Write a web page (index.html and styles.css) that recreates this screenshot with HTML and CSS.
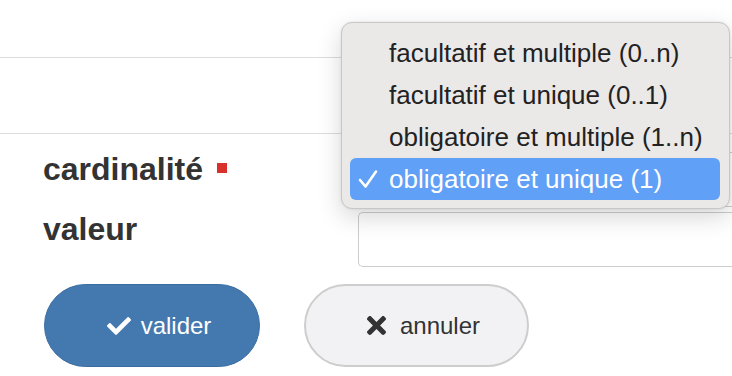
FILE: index.html
```html
<!DOCTYPE html>
<html>
<head>
    <link rel="stylesheet" href="styles.css">
</head>
<body>
    <div class="form">
        <div class="prev-row"></div>

        <div class="field-row row-cardinality">
            <div class="field-label">cardinalité <span class="required"></span></div>
            <div class="field-box select-box"></div>
        </div>

        <div class="field-row row-value">
            <div class="field-label">valeur</div>
            <input class="field-box" type="text">
        </div>

        <div class="actions">
            <button class="btn btn-primary">
                <svg class="icon-check" viewBox="0 64 512 384"><path fill="currentColor" d="M173.898 439.404l-166.4-166.4c-9.997-9.997-9.997-26.206 0-36.204l36.203-36.204c9.997-9.998 26.207-9.998 36.204 0L192 312.69 432.095 72.596c9.997-9.997 26.207-9.997 36.204 0l36.203 36.204c9.997 9.997 9.997 26.206 0 36.204l-294.4 294.401c-9.998 9.997-26.207 9.997-36.204-.001z"/></svg>
                valider
            </button>
            <button class="btn btn-default">
                <svg class="icon-times" viewBox="0 80 352 352"><path fill="currentColor" d="M242.72 256l100.07-100.07c12.28-12.28 12.28-32.19 0-44.48l-22.24-22.24c-12.28-12.280-32.19-12.28-44.48 0L176 189.28 75.930 89.21c-12.28-12.28-32.19-12.28-44.48 0L9.21 111.45c-12.28 12.28-12.28 32.19 0 44.48L109.28 256 9.21 356.07c-12.28 12.28-12.28 32.19 0 44.48l22.24 22.24c12.28 12.28 32.2 12.28 44.48 0L176 322.72l100.07 100.07c12.28 12.28 32.2 12.28 44.48 0l22.24-22.24c12.28-12.28 12.28-32.19 0-44.48L242.72 256z"/></svg>
                annuler
            </button>
        </div>
    </div>

    <div class="dropdown">
        <div class="dropdown-item"><span class="check"></span>facultatif et multiple (0..n)</div>
        <div class="dropdown-item"><span class="check"></span>facultatif et unique (0..1)</div>
        <div class="dropdown-item"><span class="check"></span>obligatoire et multiple (1..n)</div>
        <div class="dropdown-item selected">
            <span class="check"><svg viewBox="0 0 20 20"><polyline points="2,11 7.5,17.5 18,2.5" fill="none" stroke="#ffffff" stroke-width="2.6" stroke-linecap="round" stroke-linejoin="round"/></svg></span>obligatoire et unique (1)
        </div>
    </div>
</body>
</html>
```

FILE: styles.css
```css
body {
    margin: 0;
    padding: 0;
    background-color: #ffffff;
    color: #333333;
    font-family: "Liberation Sans", Arial, sans-serif;
    width: 732px;
    height: 376px;
    overflow: hidden;
    position: relative;
}

.prev-row {
    margin-top: 57px;
    height: 75px;
    border-top: 1px solid #dcdcdc;
    border-bottom: 1px solid #dcdcdc;
}

.field-row {
    display: flex;
    align-items: flex-start;
    padding-left: 43px;
}

.row-cardinality {
    margin-top: 18px;
}

.row-value {
    margin-top: 5px;
}

.field-label {
    width: 315px;
    flex-shrink: 0;
    padding-top: 3px;
    font-size: 32px;
    line-height: 28px;
    font-weight: bold;
    color: #333333;
}

.required {
    display: inline-block;
    width: 10px;
    height: 10px;
    margin-left: 5px;
    vertical-align: 7px;
    background-color: #d8302a;
}

.field-box {
    display: block;
    width: 374px;
    height: 55px;
    flex-shrink: 0;
    box-sizing: border-box;
    border: 1px solid #cccccc;
    border-right: none;
    border-radius: 5px 0 0 5px;
    background-color: #ffffff;
    margin: 0;
    padding: 0 12px;
    font-size: 24px;
    outline: none;
}

.actions {
    display: flex;
    gap: 44px;
    margin-top: 17px;
    padding-left: 44px;
}

.btn {
    display: flex;
    align-items: center;
    justify-content: center;
    gap: 10px;
    height: 83px;
    box-sizing: border-box;
    border-radius: 42px;
    padding: 0 0 0 14px;
    font-family: "Liberation Sans", Arial, sans-serif;
    font-size: 24px;
    cursor: pointer;
}

.btn-primary {
    width: 216px;
    background-color: #4479b0;
    border: 1px solid #3b6ca0;
    color: #ffffff;
}

.btn-default {
    width: 225px;
    gap: 14px;
    background-color: #f2f2f4;
    border: 2px solid #cdcdcd;
    color: #333333;
}

.icon-check {
    width: 24px;
    height: 18px;
}

.icon-times {
    width: 19px;
    height: 19px;
}

.dropdown {
    position: absolute;
    left: 341px;
    top: 22px;
    width: 389px;
    box-sizing: border-box;
    padding: 9px 9px 8px 8px;
    background-color: #ebe8e8;
    border: 1px solid #c9c6c6;
    border-radius: 11px;
    box-shadow: 0 8px 24px rgba(0, 0, 0, 0.16), 0 0 3px rgba(0, 0, 0, 0.08);
}

.dropdown-item {
    display: flex;
    align-items: center;
    height: 42px;
    padding-left: 8px;
    border-radius: 6px;
    font-size: 26px;
    color: #222222;
    white-space: nowrap;
}

.dropdown-item .check {
    display: flex;
    align-items: center;
    width: 31px;
    flex-shrink: 0;
}

.dropdown-item .check svg {
    width: 20px;
    height: 20px;
}

.dropdown-item.selected {
    background-color: #60a0f6;
    color: #ffffff;
}
```
